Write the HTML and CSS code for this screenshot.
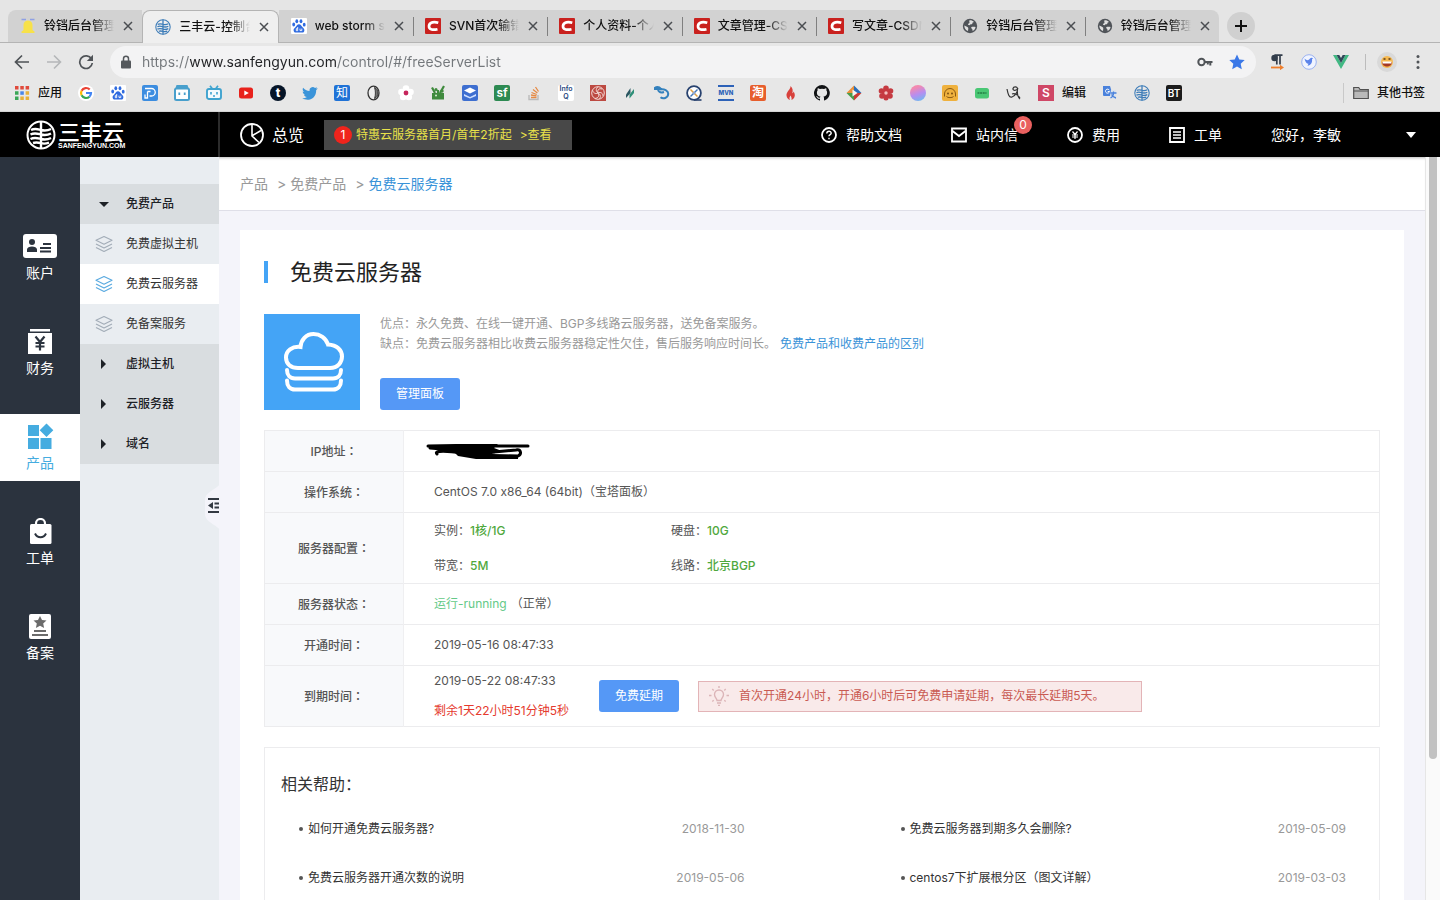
FILE: index.html
```html
<!DOCTYPE html>
<html lang="zh-CN">
<head>
<meta charset="utf-8">
<meta name="viewport" content="width=device-width, initial-scale=1">
<title>三丰云-控制台</title>
<link rel="stylesheet" href="styles.css">
</head>
<body>
<svg class="defs" aria-hidden="true">
  <symbol id="i-close" viewBox="0 0 12 12"><path d="M2 2l8 8M10 2l-8 8" stroke="#4a4d51" stroke-width="1.5" fill="none"/></symbol>
  <symbol id="i-csdn" viewBox="0 0 16 16"><rect width="16" height="16" rx="1" fill="#c9211e"/><path d="M13.300 4.800C9.500 3.700 4.400 3.800 4 8c-.3 4 4.500 4.200 8.500 3.200" stroke="#fff" stroke-width="2.700" fill="none"/></symbol>
  <symbol id="i-globe" viewBox="0 0 16 16"><circle cx="8" cy="8" r="7.200" fill="#505459"/><path d="M2.300 7.500l2.700 1.300c1.200.5 1.500 1.500 1.200 2.500l-.2 1.700C3.800 12.200 2.200 10 2.300 7.500zM7.500 2.300c1.500-.2 3.300.3 4.500 1.700-1 .2-1.600.6-1.600 1.300.2 1-1 1-1.800 1-.6.2-.4 1-1.200 1-.9 0-1.600-.4-1.400-1.200.2-.7 1.300-.4 1.500-1.300.1-.8-.6-1.300 0-2.500zM9.500 9c1.200-.6 2.700-.3 4.100-.1-.3 1.800-1.400 3.200-2.900 4.100-.3-.7 0-1.400-.6-1.900-.7-.6-1.300-1.500-.6-2.100z" fill="#e0e0e0"/></symbol>
  <symbol id="i-baidu" viewBox="0 0 16 16"><rect width="16" height="16" rx="1" fill="#fff"/><g fill="#2f6be0"><ellipse cx="5.800" cy="3.200" rx="1.400" ry="2"/><ellipse cx="10" cy="3.200" rx="1.400" ry="2"/><ellipse cx="2.700" cy="6.500" rx="1.400" ry="1.900"/><ellipse cx="13.200" cy="6.700" rx="1.400" ry="1.900"/><path d="M8 6.300c1.800 0 2.400 1.700 3.600 2.900 1.500 1.400 2.200 2.300 1.600 4-.7 2-3.300 1.300-5.200 1.300s-4.400.7-5.200-1.300c-.6-1.700.2-2.700 1.600-4C5.600 8 6.200 6.300 8 6.300z"/></g><path d="M6.700 9v3.700H5.300v-2h1.400M9 10.600v2h1.800v-2" stroke="#fff" stroke-width=".9" fill="none"/></symbol>
  <symbol id="i-sanfeng" viewBox="0 0 30 30"><circle cx="15" cy="15" r="13.500" fill="none" stroke="currentColor" stroke-width="2"/><path d="M15 1v28M5 10c4-2 6-1 10 0s6 1 10-1M4.500 14.500c4-2 6.500-1 10.500 0s6 1 10-1M4.500 19c4-2 6.500-1 10.500 0s6 1 10-1M7 23c3-1 5-.6 8 .2s5 .6 8-.6" fill="none" stroke="currentColor" stroke-width="2.400"/></symbol>
  <symbol id="i-layers" viewBox="0 0 18 18"><g fill="none" stroke="currentColor" stroke-width="1.200" stroke-linejoin="round"><path d="M9 1.500l8 3.800-8 3.900-8-3.900z"/><path d="M1 9l8 4 8-4M1 12.500l8 4 8-4"/></g></symbol>
</svg>

<div class="browser">
  <nav class="tabstrip" aria-label="标签页">
    <div class="tabs">
      <div class="tab first">
        <svg class="fav" viewBox="0 0 16 16"><path d="M1.500 1.500h4.500M10 1.500h4.500" stroke="#8ea0e4" stroke-width="1.500"/><path d="M3.500 12V7a4.500 4.500 0 019 0v5l2 1.500v1.500H1.500v-1.500z" fill="#f7e14a"/></svg>
        <span class="tab-title">铃铛后台管理系统</span><button class="x" aria-label="关闭"><svg><use href="#i-close"/></svg></button></div>
      <div class="tab active"><svg class="fav blue"><use href="#i-sanfeng"/></svg><span class="tab-title">三丰云-控制台首页</span><button class="x" aria-label="关闭"><svg><use href="#i-close"/></svg></button></div>
      <div class="tab"><svg class="fav"><use href="#i-baidu"/></svg><span class="tab-title">web storm svn</span><button class="x" aria-label="关闭"><svg><use href="#i-close"/></svg></button></div>
      <div class="tab sep"><svg class="fav"><use href="#i-csdn"/></svg><span class="tab-title">SVN首次输错密码</span><button class="x" aria-label="关闭"><svg><use href="#i-close"/></svg></button></div>
      <div class="tab sep"><svg class="fav"><use href="#i-csdn"/></svg><span class="tab-title">个人资料-个人中心</span><button class="x" aria-label="关闭"><svg><use href="#i-close"/></svg></button></div>
      <div class="tab sep"><svg class="fav"><use href="#i-csdn"/></svg><span class="tab-title">文章管理-CSDN</span><button class="x" aria-label="关闭"><svg><use href="#i-close"/></svg></button></div>
      <div class="tab sep"><svg class="fav"><use href="#i-csdn"/></svg><span class="tab-title">写文章-CSDN博客</span><button class="x" aria-label="关闭"><svg><use href="#i-close"/></svg></button></div>
      <div class="tab sep"><svg class="fav"><use href="#i-globe"/></svg><span class="tab-title">铃铛后台管理系统</span><button class="x" aria-label="关闭"><svg><use href="#i-close"/></svg></button></div>
      <div class="tab sep"><svg class="fav"><use href="#i-globe"/></svg><span class="tab-title">铃铛后台管理系统</span><button class="x" aria-label="关闭"><svg><use href="#i-close"/></svg></button></div>
    </div>
    <button class="newtab" aria-label="新标签页"><svg viewBox="0 0 14 14"><path d="M7 1v12M1 7h12" stroke="#111" stroke-width="2"/></svg></button>
  </nav>

  <div class="toolbar">
    <button class="tool" aria-label="后退"><svg viewBox="0 0 16 16"><path d="M15 8H2M8 1.500L1.500 8 8 14.500" fill="none" stroke="#4f5357" stroke-width="1.700"/></svg></button>
    <button class="tool" aria-label="前进"><svg viewBox="0 0 16 16"><path d="M1 8h13M8 1.500L14.500 8 8 14.500" fill="none" stroke="#b5b7b9" stroke-width="1.600"/></svg></button>
    <button class="tool" aria-label="刷新"><svg viewBox="0 0 16 16"><path d="M13.500 5A6.300 6.300 0 1014.300 9" fill="none" stroke="#4f5357" stroke-width="1.700"/><path d="M15 .8V7H8.800z" fill="#4f5357"/></svg></button>
    <div class="omnibox">
      <svg class="lock" viewBox="0 0 10 14"><path d="M2.500 6V3.800a2.500 2.500 0 015 0V6" fill="none" stroke="#54585c" stroke-width="1.500"/><rect y="5.500" width="10" height="8" rx="1" fill="#54585c"/></svg>
      <input class="url" type="text" aria-label="网址" value="https://www.sanfengyun.com/control/#/freeServerList">
      <svg class="ic16" viewBox="0 0 16 16"><circle cx="4.500" cy="8" r="3.200" fill="none" stroke="#505458" stroke-width="2"/><path d="M7.500 8h8M13.300 8v3.500M10.800 8v2.500" stroke="#505458" stroke-width="2"/></svg>
      <svg class="ic16" viewBox="0 0 16 16"><path d="M8 .5l2.300 5 5.400.6-4 3.700 1.100 5.400L8 12.500l-4.800 2.700 1.100-5.400-4-3.700 5.400-.6z" fill="#3b78e7"/></svg>
    </div>
    <div class="exts">
      <svg class="ic16" viewBox="0 0 16 16"><path d="M13.500 1.200H5.500M7.800 1v9.500M11 1v9.500" stroke="#333e4c" stroke-width="1.700" fill="none"/><circle cx="5.500" cy="4" r="3.200" fill="#333e4c"/><path d="M2 13.500h10" stroke="#ee7f2d" stroke-width="1.800"/><path d="M11 10.800l4 2.700-4 2.700z" fill="#ee7f2d"/></svg>
      <svg class="ic16" viewBox="0 0 16 16"><circle cx="8" cy="8" r="7.300" fill="#f0f4ff" stroke="#9bb2f1"/><path d="M3.500 4.500C6 7 7.500 6.500 9 4.500c1-1 2.500-.8 3-.2l-1 1c.5 3-1 6-4.500 6.500l1-2C5.500 9.800 4 7.500 3.500 4.500z" fill="#5b83ea"/></svg>
      <svg class="ic16" viewBox="0 0 16 16"><path d="M0 1h3.500L8 9l4.500-8H16L8 15z" fill="#41b883"/><path d="M3.500 1H6.300L8 4l1.700-3h2.800L8 9z" fill="#2f4858"/></svg>
      <i class="vline"></i>
      <svg class="avatar" viewBox="0 0 20 20"><circle cx="10" cy="10" r="10" fill="#d9d9d9"/><circle cx="10" cy="10" r="6" fill="#f6b950"/><path d="M5 10h10c0 6-10 6-10 0z" fill="#a53925"/><path d="M5.500 9.500h9v2h-9z" fill="#fff"/><path d="M6.500 7h2M11.500 7h2" stroke="#5b3a17" stroke-width="1.500"/></svg>
      <svg class="ic16" viewBox="0 0 16 16"><g fill="#505458"><circle cx="8" cy="2.500" r="1.500"/><circle cx="8" cy="8" r="1.500"/><circle cx="8" cy="13.500" r="1.500"/></g></svg>
    </div>
  </div>

  <nav class="bookmarks" aria-label="书签栏">
    <a class="bm" href="#"><svg viewBox="0 0 16 16"><path d="M1 1h3.500v3.500H1zM6.300 1h3.500v3.500H6.300zM11.600 1h3.500v3.500h-3.500z" fill="#e04a3c"/><path d="M1 6.300h3.500v3.500H1zM1 11.600h3.500v3.500H1z" fill="#3aa757"/><path d="M6.300 6.300h3.500v3.500H6.300z" fill="#4a86e8"/><path d="M11.600 6.300h3.500v3.500h-3.500zM6.300 11.600h3.500v3.500H6.300zM11.600 11.600h3.500v3.500h-3.500z" fill="#e8b13a"/></svg>应用</a>
    <a class="bm" href="#" aria-label="Google"><svg viewBox="0 0 16 16"><circle cx="8" cy="8" r="8" fill="#fff"/><g fill="none" stroke-width="2.200"><path d="M11.700 4.600A5 5 0 003.600 5.700" stroke="#ea4335"/><path d="M3.600 5.700a5 5 0 000 4.600" stroke="#fbbc05"/><path d="M3.600 10.300a5 5 0 007.800 1.400" stroke="#34a853"/><path d="M11.400 11.700A5 5 0 0013 8H8" stroke="#4285f4"/></g></svg></a>
    <a class="bm" href="#" aria-label="百度"><svg><use href="#i-baidu"/></svg></a>
    <a class="bm" href="#" aria-label="P"><svg viewBox="0 0 16 16"><rect width="16" height="16" rx="2" fill="#3c8de0"/><path d="M3 3.500h6.500a3.700 3.700 0 010 7.500H7.500M5.500 6.500V13H3V9.500M5.500 6.500h3" fill="none" stroke="#fff" stroke-width="1.300"/></svg></a>
    <a class="bm" href="#" aria-label="哔哩"><svg viewBox="0 0 16 16"><path d="M2.500 0h11l1 3h-13z" fill="#489fcc"/><rect x="1" y="3.500" width="14" height="11.500" rx="1.500" fill="#fff" stroke="#489fcc" stroke-width="2"/><path d="M5.300 7.500V10M10.700 7.500V10" stroke="#489fcc" stroke-width="1.800"/></svg></a>
    <a class="bm" href="#" aria-label="bilibili"><svg viewBox="0 0 16 16"><path d="M4 .8L6.500 4M12 .8L9.500 4" stroke="#3fa3cf" stroke-width="1.700"/><rect x="1" y="4" width="14" height="10" rx="2" fill="#f4fafd" stroke="#3fa3cf" stroke-width="1.900"/><path d="M5 7v2.500M11 7v2.500M7 11h2" stroke="#3fa3cf" stroke-width="1.600"/></svg></a>
    <a class="bm" href="#" aria-label="YouTube"><svg viewBox="0 0 16 16"><rect x="1" y="2.500" width="14" height="11" rx="2.500" fill="#e8221c"/><path d="M6.300 5.500v5L10.800 8z" fill="#fff"/></svg></a>
    <a class="bm" href="#"><span class="tile round navy">t</span></a>
    <a class="bm" href="#" aria-label="Twitter"><svg viewBox="0 0 16 16"><path d="M15.800 3.300l-1.700.5.9-1.600-2 .8a3.200 3.200 0 00-5.400 3C4.800 6 2.600 4.600 1.100 2.700c-.8 1.400-.4 3.200 1 4.200l-1.400-.3c0 1.500 1 2.800 2.600 3.200H1.900c.4 1.200 1.500 2.200 3 2.200-1.300 1-2.900 1.400-4.600 1.300 5.800 3.500 14 .6 13.900-8.300.6-.4 1.200-1 1.600-1.700z" fill="#3b94d9"/></svg></a>
    <a class="bm" href="#"><span class="tile zhi">知</span></a>
    <a class="bm" href="#" aria-label="月"><svg viewBox="0 0 16 16"><ellipse cx="7.500" cy="8" rx="5.500" ry="6.800" fill="#eee" stroke="#333" stroke-width="1.300"/><path d="M8.500 2.500c4.500 1.500 4.500 9.500 0 11 1.200-3.500 1.200-7.500 0-11z" fill="#777" stroke="#222" stroke-width=".8"/></svg></a>
    <a class="bm" href="#" aria-label="花"><svg viewBox="0 0 16 16"><g fill="#fff"><circle cx="8" cy="3.500" r="3.300"/><circle cx="12.500" cy="7" r="3.300"/><circle cx="10.800" cy="12" r="3.300"/><circle cx="5.200" cy="12" r="3.300"/><circle cx="3.500" cy="7" r="3.300"/></g><circle cx="8" cy="8" r="2.400" fill="#c6265c"/></svg></a>
    <a class="bm" href="#" aria-label="草"><svg viewBox="0 0 16 16"><path d="M2 8h12v6.500H2z" fill="#3f8a3d"/><path d="M5 8L2 2.500M10 8l4-7M8 8V5" stroke="#3f8a3d" stroke-width="2.200"/><circle cx="6" cy="4.500" r="1.500" fill="#3f8a3d"/><circle cx="12" cy="6" r="1.700" fill="#3f8a3d"/><circle cx="6" cy="10.500" r="1" fill="#d9edd3"/></svg></a>
    <a class="bm" href="#" aria-label="文档"><svg viewBox="0 0 16 16"><rect width="16" height="16" rx="2" fill="#3e6fd0"/><path d="M8 2.500l6 3-6 3-6-3z" fill="#fff"/><path d="M2 9l6 3 6-3v2l-6 2.500L2 11z" fill="#cfe0ff"/></svg></a>
    <a class="bm" href="#"><span class="tile green">sf</span></a>
    <a class="bm" href="#" aria-label="Stack Overflow"><svg viewBox="0 0 16 16"><path d="M3 10v4.500h9V10" fill="none" stroke="#bbb" stroke-width="1.400"/><path d="M5 12.500h5.500M5 10l5.500.8M5.500 7.500l5.200 2M7 4.500l4.400 3.400M9.500 2l3 4.500" stroke="#e58a45" stroke-width="1.300"/></svg></a>
    <a class="bm" href="#"><span class="tile info">Info<br>Q</span></a>
    <a class="bm" href="#" aria-label="螺旋"><svg viewBox="0 0 16 16"><rect width="16" height="16" fill="#bd4a42"/><circle cx="8" cy="8" r="6.300" fill="none" stroke="#f4dad6"/><path d="M8 8c-1-3 1-5 4-4M8 8c3-1.500 5 .5 5 3M8 8c2 3 0 5-3 5.500M8 8c-3 1.500-5-.5-5.500-3M8 8C5 5.500 6.500 3 8 2M8 8c2.500 1 3 4 1.500 6" fill="none" stroke="#f4dad6"/></svg></a>
    <a class="bm" href="#" aria-label="叶"><svg viewBox="0 0 16 16"><path d="M4 9.500L8.500 3v5L4 13z" fill="#2b5661"/><path d="M7.500 9.500L12 4v4l-4.500 5.500z" fill="#2f8f78"/></svg></a>
    <a class="bm" href="#" aria-label="龙"><svg viewBox="0 0 16 16"><path d="M.5 3.200c2.500-1.800 5-1 6.500.8H.5zM6 4.500c4-1 8.500 1 8.200 4.500-.3 4-5 5.500-7.700 3.300M4 5c1 2.500 3.500 2.800 6 2" fill="none" stroke="#3481bd" stroke-width="2"/></svg></a>
    <a class="bm" href="#" aria-label="查询"><svg viewBox="0 0 16 16"><circle cx="8" cy="8" r="6.900" fill="#fff" stroke="#28426f" stroke-width="1.800"/><path d="M8 15h7.500" stroke="#28426f" stroke-width="1.600"/><path d="M4.500 4.500l7 7" stroke="#e1a043" stroke-width="1.500"/><path d="M11.500 4.500l-7 7" stroke="#4479bd" stroke-width="1.500"/><circle cx="8" cy="8" r="1.500" fill="#8fa6c9"/></svg></a>
    <a class="bm" href="#"><span class="tile mvn">MVN</span></a>
    <a class="bm" href="#"><span class="tile tao">淘</span></a>
    <a class="bm" href="#" aria-label="火"><svg viewBox="0 0 16 16"><path d="M8.500 1c.5 3-4.500 6-4 9.500.2 2.500 2 4 3.500 4.500-1-2-.5-3 .8-4.500.2 1.500 1.200 2 .7 4.500 2.500-1 3.800-3.500 3.200-6-.3-1.200-.8-1.800-1-2.500-.5 1-.7 1.500-1.400 1.800C11 6 11 3 8.500 1z" fill="#d8413c"/></svg></a>
    <a class="bm" href="#" aria-label="GitHub"><svg viewBox="0 0 16 16"><path d="M8 0a8 8 0 00-2.500 15.600c.4 0 .5-.2.500-.4v-1.500c-2.200.5-2.700-1-2.700-1-.4-.9-.9-1.200-.9-1.200-.7-.5.100-.5.100-.5.800.1 1.200.8 1.200.8.700 1.300 1.900.9 2.300.7.100-.5.300-.9.500-1.100-1.800-.2-3.600-.9-3.600-4 0-.9.300-1.600.8-2.100-.1-.2-.4-1 .1-2.100 0 0 .7-.2 2.200.8a7.500 7.500 0 014 0c1.500-1 2.200-.8 2.200-.8.4 1.100.2 1.900.1 2.100.5.600.8 1.300.8 2.100 0 3.100-1.900 3.800-3.700 4 .3.300.6.800.6 1.500v2.200c0 .2.100.5.600.4A8 8 0 008 0z" fill="#101214"/></svg></a>
    <a class="bm" href="#" aria-label="菱形"><svg viewBox="0 0 16 16"><path d="M8 .5V8H.5z" fill="#e9903a"/><path d="M8 .5V8h7.500z" fill="#2b6fb8"/><path d="M.5 8H8v7.500z" fill="#4a9c4b"/><path d="M15.500 8H8v7.500z" fill="#c93b35"/><path d="M6.500 4.500L11.500 8l-5 3.500z" fill="#f5f5f5"/></svg></a>
    <a class="bm" href="#" aria-label="红花"><svg viewBox="0 0 16 16"><g fill="#c53a41"><circle cx="8" cy="3.300" r="2.800"/><circle cx="12.500" cy="6" r="2.800"/><circle cx="12" cy="11" r="2.800"/><circle cx="8" cy="13" r="2.500"/><circle cx="4" cy="11" r="2.800"/><circle cx="3.500" cy="6" r="2.800"/><circle cx="8" cy="8" r="4"/></g><circle cx="8" cy="8" r="1.700" fill="#f4c0c0"/></svg></a>
    <a class="bm" href="#" aria-label="渐变"><span class="orb"></span></a>
    <a class="bm" href="#" aria-label="小熊"><svg viewBox="0 0 16 16"><rect width="16" height="16" rx="2" fill="#efb13e"/><path d="M2.500 11.500V9a5.500 5.500 0 0111 0v2.500M4.500 11.500c1 1.500 6 1.500 7 0" fill="none" stroke="#8a5a13"/><circle cx="6" cy="8.500" r=".9" fill="#714812"/><circle cx="10" cy="8.500" r=".9" fill="#714812"/></svg></a>
    <a class="bm" href="#" aria-label="绿卡"><svg viewBox="0 0 16 16"><rect x="1" y="3" width="14" height="10.500" rx="2.500" fill="#49c774"/><path d="M3.500 8h9" stroke="#2c8f50" stroke-width="2" stroke-dasharray="2 .6"/></svg></a>
    <a class="bm" href="#" aria-label="签名"><svg viewBox="0 0 16 16"><path d="M1 4c1 5 2 9 5 8s6-5 5.500-8.500C11 1 7.500 1.500 7 3.500 6.500 6 11 6 12 3M11.500 3c-.5 5 0 9 2.500 11M6 9c3-1 6 1 8 4" fill="none" stroke="#333" stroke-width="1.200"/></svg></a>
    <a class="bm" href="#"><span class="tile rose">S</span>编辑</a>
    <a class="bm" href="#" aria-label="翻译"><svg viewBox="0 0 16 16"><path d="M1 1h7l3 10H2a1 1 0 01-1-1z" fill="#4a82dc"/><path d="M7.300 5.200a2 2 0 10.200 1.300H5.700" fill="none" stroke="#fff"/><path d="M9 5h5v9H9l-1-3" fill="#dce3ec"/><path d="M8.500 8h6M11.500 6.500V8c0 2-1 4-3 5M9.500 9.500c1 2 2.500 3 4.500 3.500" stroke="#4a82dc" stroke-width="1.300" fill="none"/></svg></a>
    <a class="bm" href="#" aria-label="三丰云"><svg class="blue"><use href="#i-sanfeng"/></svg></a>
    <a class="bm" href="#"><span class="tile black">BT</span></a>
    <a class="bm other" href="#"><svg viewBox="0 0 16 16"><path d="M.7 13.500v-11h5l1.300 2h8.300v9z" fill="#b9b9b9" stroke="#515151" stroke-width="1.200"/><path d="M1 6h14" stroke="#515151"/></svg>其他书签</a>
  </nav>
</div>

<header class="topbar">
  <a class="logo" href="#"><svg><use href="#i-sanfeng"/></svg><span class="logo-words"><b>三丰云</b><small>SANFENGYUN.COM</small></span></a>
  <a class="overview" href="#"><svg viewBox="0 0 24 24"><circle cx="12" cy="12" r="11" fill="none" stroke="#fff" stroke-width="1.800"/><path d="M12 1v12l7 6.500M12.500 12.500l8.500-5" fill="none" stroke="#fff" stroke-width="1.600"/></svg>总览</a>
  <a class="promo" href="#"><span class="dot">1</span><span>特惠云服务器首月/首年2折起</span><span class="look">&gt;查看</span></a>
  <nav class="topnav">
    <a href="#"><svg viewBox="0 0 16 16"><circle cx="8" cy="8" r="7" fill="none" stroke="#fff" stroke-width="1.800"/><path d="M5.800 6.500c0-3 4.500-2.800 4.400-.2 0 1.400-2.200 1.400-2.200 3M8 10.800v1.500" fill="none" stroke="#fff" stroke-width="1.400"/></svg>帮助文档</a>
    <a href="#"><svg viewBox="0 0 16 16"><path d="M1 1.500h14v13H1z" fill="none" stroke="#fff" stroke-width="1.800"/><path d="M1.500 4L8 9l6.500-5" fill="none" stroke="#fff" stroke-width="1.800"/></svg>站内信<span class="count">0</span></a>
    <a href="#"><svg viewBox="0 0 16 16"><circle cx="8" cy="8" r="7" fill="none" stroke="#fff" stroke-width="1.800"/><path d="M5.500 4.500L8 7.500l2.500-3M8 7.500V12M5 8h6M5 10h6" fill="none" stroke="#fff" stroke-width="1.200"/></svg>费用</a>
    <a href="#"><svg viewBox="0 0 16 16"><path d="M1 1h14v14H1z" fill="none" stroke="#fff" stroke-width="1.800"/><path d="M4 5h8M4 8h8M4 11h8" stroke="#fff" stroke-width="1.300"/></svg>工单</a>
    <button class="user">您好，李敏<svg viewBox="0 0 10 6"><path d="M0 0h10L5 6z" fill="#fff"/></svg></button>
  </nav>
</header>

<div class="app">
  <nav class="rail">
    <a href="#"><svg viewBox="0 0 36 26"><rect x="1" y="1" width="34" height="24" rx="3" fill="#fff"/><g fill="#2b333e"><circle cx="10" cy="9" r="3"/><path d="M5 19v-2.500c0-4 10-4 10 0V19zM21 10h8v2h-8zM18 14h11v2H18zM18 17.500h11v2H18z"/></g></svg>账户</a>
    <a href="#"><svg viewBox="0 0 36 26"><path d="M8 1h20v2.500H8zM6 5h24v21H6z" fill="#fff"/><path d="M13.500 8.500L18 14l4.500-5.500M18 14v8.500M13.500 15h9M13.500 18.500h9" fill="none" stroke="#2b333e" stroke-width="2.200"/></svg>财务</a>
    <a href="#" class="on"><svg viewBox="0 0 36 26"><path d="M6 2h11v11H6zM6 15h11v11H6zM18.500 15h11v11h-11zM24.500 .5l6.800 6.800-6.800 6.800-6.800-6.800z" fill="#45ace0"/></svg>产品</a>
    <a href="#"><svg viewBox="0 0 36 26"><path d="M14 7V5.500a4.500 4.500 0 019 0V7" fill="none" stroke="#fff" stroke-width="2.200"/><rect x="8" y="6" width="21.500" height="20" rx="1.500" fill="#fff"/><path d="M13 15.500c2.500 5 8.500 5 11 0" fill="none" stroke="#2b333e" stroke-width="2"/></svg>工单</a>
    <a href="#"><svg viewBox="0 0 36 26"><rect x="7" y="1" width="22" height="25" rx="2" fill="#fff"/><path d="M18 3l2 4 4.500.5-3.300 3 .9 4.500-4.100-2.200-4.100 2.200.9-4.500-3.300-3L16 7z" fill="#6b6b6b"/><path d="M12 18h12M10 22h16" stroke="#6b6b6b" stroke-width="2"/></svg>备案</a>
  </nav>

  <nav class="menu">
    <a href="#" class="group"><svg class="tri" viewBox="0 0 18 18"><path d="M4 7h10l-5 5z"/></svg>免费产品</a>
    <a href="#"><svg><use href="#i-layers"/></svg>免费虚拟主机</a>
    <a href="#" class="current"><svg><use href="#i-layers"/></svg>免费云服务器</a>
    <a href="#"><svg><use href="#i-layers"/></svg>免备案服务</a>
    <a href="#" class="group"><svg class="tri" viewBox="0 0 18 18"><path d="M6 4v10l5-5z"/></svg>虚拟主机</a>
    <a href="#" class="group"><svg class="tri" viewBox="0 0 18 18"><path d="M6 4v10l5-5z"/></svg>云服务器</a>
    <a href="#" class="group"><svg class="tri" viewBox="0 0 18 18"><path d="M6 4v10l5-5z"/></svg>域名</a>
    <button class="fold" aria-label="收起菜单"><svg viewBox="0 0 17 50"><path d="M17 0v50C15 43 1 41 1 32V18C1 9 15 7 17 0z" fill="#f4f4fa"/><path d="M4 17h11M4 30h11M10.500 21.500H15M10.500 25.500H15" stroke="#333942" stroke-width="1.800"/><path d="M9 20v7l-5-3.500z" fill="#333942"/></svg></button>
  </nav>

  <main class="content">
    <div class="crumbs"><a href="#">产品</a><span class="gt">&gt;</span><a href="#">免费产品</a><span class="gt">&gt;</span><a href="#" class="here">免费云服务器</a></div>
    <section class="card">
      <h1>免费云服务器</h1>
      <div class="intro">
        <svg class="cloud" viewBox="0 0 96 96"><rect width="96" height="96" fill="#44a4f6"/><g fill="none" stroke="#fff" stroke-width="4" stroke-linecap="round"><path d="M34 54h32c8 0 12-6 12-11.500C78 36 73 31 64 30.500 62 24 56 20 49.500 20 42 20 37 26 36.500 33 28 32 22 37 22 43.500 22 50 27 54 34 54z"/><path d="M23 56c0 5 3 8.500 8 8.500h38c5 0 8-3.500 8-8.500M23 66.500c0 5.500 3 9 8 9h38c5 0 8-3.500 8-9"/></g></svg>
        <div class="pros">
          <p>优点：永久免费、在线一键开通、BGP多线路云服务器，送免备案服务。</p>
          <p>缺点：免费云服务器相比收费云服务器稳定性欠佳，售后服务响应时间长。<a href="#">免费产品和收费产品的区别</a></p>
          <button class="btn">管理面板</button>
        </div>
      </div>
      <table class="info-table">
        <tr><th scope="row">IP地址<i lang="zh-TW">：</i></th><td><svg class="scribble" viewBox="0 0 104 20" role="img" aria-label="已涂抹"><path d="M2 5h100M4 7l35 3M11 13c-4-4 12-3 25-1l30 3h26c4-2 3-7-2-6l-22 2" fill="none" stroke="#000" stroke-width="3" stroke-linecap="round"/><path d="M2 4l28-1h42l-4 4 8 3-10 3 26 1v4H50l-18-3-4-4-18-4z" fill="#000"/></svg></td></tr>
        <tr><th scope="row">操作系统<i lang="zh-TW">：</i></th><td>CentOS 7.0 x86_64 (64bit)（宝塔面板）</td></tr>
        <tr><th scope="row">服务器配置<i lang="zh-TW">：</i></th><td><div class="specs"><span>实例：<b>1核/1G</b></span><span>硬盘：<b>10G</b></span><span>带宽：<b>5M</b></span><span>线路：<b>北京BGP</b></span></div></td></tr>
        <tr><th scope="row">服务器状态<i lang="zh-TW">：</i></th><td><span class="running">运行-running</span>（正常）</td></tr>
        <tr><th scope="row">开通时间<i lang="zh-TW">：</i></th><td>2019-05-16 08:47:33</td></tr>
        <tr><th scope="row">到期时间<i lang="zh-TW">：</i></th><td><div class="expire"><div class="times"><p>2019-05-22 08:47:33</p><p class="left">剩余1天22小时51分钟5秒</p></div><button class="btn">免费延期</button><p class="notice"><svg viewBox="0 0 20 20"><g fill="none" stroke="#dcb5b8" stroke-width="1.400"><path d="M8 14.500c0-2-2.500-3-2.500-6a4.500 4.500 0 019 0c0 3-2.500 4-2.500 6zM8 17h4M9 19.500h2M10 0v2M3.300 3l1.400 1.400M16.700 3l-1.400 1.400M0 9.500h2.500M17.500 9.500H20M3.300 15.500l1.400-1.200M16.700 15.500l-1.400-1.200"/></g></svg>首次开通24小时，开通6小时后可免费申请延期，每次最长延期5天。</p></div></td></tr>
      </table>
      <section class="help">
        <h2>相关帮助：</h2>
        <ul>
          <li><a href="#">如何开通免费云服务器?</a><time>2018-11-30</time></li>
          <li><a href="#">免费云服务器到期多久会删除?</a><time>2019-05-09</time></li>
          <li><a href="#">免费云服务器开通次数的说明</a><time>2019-05-06</time></li>
          <li><a href="#">centos7下扩展根分区（图文详解）</a><time>2019-03-03</time></li>
        </ul>
      </section>
    </section>
  </main>
  <div class="scroll"><i></i></div>
</div>
</body>
</html>
```
FILE: styles.css
```css
* { box-sizing: border-box; }
body {
  margin: 0;
  height: 100vh;
  display: flex;
  flex-direction: column;
  overflow: hidden;
  font: 12px/20px Inter, "Noto Sans CJK SC", sans-serif;
  color: #555;
}
a { color: inherit; text-decoration: none; }
p, h1, h2, ul { margin: 0; padding: 0; }
button { border: 0; padding: 0; background: none; font: inherit; color: inherit; }
svg { display: block; flex: none; }
i { font-style: normal; }
.defs { position: absolute; width: 0; height: 0; }
.blue { color: #3d7cb8; }
.ic16 { width: 16px; height: 16px; }

/* browser frame */
.browser { flex: none; background: #e7e7e7; color: #111; }
.tabstrip {
  display: flex;
  align-items: center;
  gap: 8px;
  height: 43px;
  padding: 10px 8px 0;
  border-bottom: 1px solid #b4b4b4;
  background: #e5e5e5;
}
.tabs { display: flex; flex: 0 1 1211px; align-self: stretch; min-width: 0; }
.tab {
  flex: 1 1 0;
  min-width: 0;
  display: flex;
  align-items: center;
  gap: 8px;
  padding: 0 8px 0 12px;
  background: #d2d2d2;
  position: relative;
}
.tab.first { border-radius: 8px 0 0 0; }
.tab:last-child { border-radius: 0 8px 0 0; }
.tab.active {
  background: #efefef;
  border: 1px solid #b4b4b4;
  border-bottom: 0;
  border-radius: 8px 8px 0 0;
  margin-bottom: -1px;
}
.tab.sep::before {
  content: "";
  position: absolute;
  left: 0;
  top: 7px;
  width: 1px;
  height: 19px;
  background: #808080;
}
.fav { width: 16px; height: 16px; }
.tab-title {
  flex: 1;
  min-width: 0;
  overflow: hidden;
  white-space: nowrap;
  font-weight: 500;
  -webkit-mask-image: linear-gradient(90deg, #000 70%, transparent);
  mask-image: linear-gradient(90deg, #000 70%, transparent);
}
.x svg { width: 12px; height: 12px; }
.newtab {
  display: grid;
  place-items: center;
  width: 28px;
  height: 28px;
  border-radius: 50%;
  background: #d0d0d0;
}
.newtab svg { width: 14px; height: 14px; }
.toolbar { display: flex; align-items: center; height: 37px; padding: 0 14px; gap: 16px; }
.tool svg { width: 16px; height: 16px; }
.omnibox {
  flex: 1;
  display: flex;
  align-items: center;
  gap: 16px;
  height: 32px;
  padding: 0 11px;
  border-radius: 16px;
  background: #f3f3f4;
}
.lock { width: 10px; height: 14px; }
.url {
  flex: 1;
  min-width: 0;
  height: 24px;
  padding: 0;
  margin-left: -5px;
  border: 0;
  outline: 0;
  font: 14px/24px Inter, sans-serif;
  color: #5f6368;
  background: linear-gradient(90deg, #73777b 48px, #202124 48px, #202124 195px, #73777b 195px);
  -webkit-background-clip: text;
  background-clip: text;
  -webkit-text-fill-color: transparent;
}
.exts { display: flex; align-items: center; gap: 16px; margin-left: -3px; }
.vline { width: 1px; height: 16px; background: #bcbcbc; margin-right: -5px; }
.avatar { width: 20px; height: 20px; }
.exts .ic16:last-child { margin-left: -3px; }
.bookmarks {
  display: flex;
  align-items: center;
  gap: 16px;
  height: 32px;
  padding: 0 15px 6px 14px;
  border-bottom: 1px solid #d4d4d4;
  font-weight: 500;
  white-space: nowrap;
}
.bm { display: flex; align-items: center; gap: 8px; }
.bm svg { width: 16px; height: 16px; }
.bm.other { margin-left: auto; padding-left: 9px; border-left: 1px solid #c9c9c9; }
.tile {
  width: 16px;
  height: 16px;
  border-radius: 2px;
  display: block;
  text-align: center;
  font-size: 12px;
  line-height: 16px;
  font-weight: 600;
  color: #fff;
}
.round { border-radius: 50%; }
.navy { background: #051427; font-weight: 800; }
.zhi { background: #1f72d6; font-weight: 400; }
.green { background: #2d8a52; }
.info { background: #fff; color: #24457c; font-size: 7px; line-height: 8px; }
.mvn { border: solid #2d62b8; border-width: 2px 0; border-radius: 0; color: #2d62b8; font-size: 6px; line-height: 12px; font-weight: 800; }
.tao { background: #e75e2c; }
.orb { width: 16px; height: 16px; border-radius: 50%; background: linear-gradient(160deg, #f38ab0 20%, #b78df0 55%, #62c1ef); }
.rose { background: #cf4766; border-radius: 0; }
.black { background: #1c1c1c; font-size: 10px; }

/* console header */
.topbar {
  flex: none;
  display: flex;
  align-items: center;
  height: 45px;
  background: #000;
  color: #fff;
  white-space: nowrap;
}
.logo {
  width: 220px;
  align-self: stretch;
  display: flex;
  align-items: center;
  gap: 2px;
  padding-left: 26px;
  border-right: 2px solid #2c2c2c;
}
.logo > svg { width: 30px; height: 30px; }
.logo-words { display: flex; flex-direction: column; }
.logo-words b { font: 500 22px/22px "Noto Sans CJK SC", sans-serif; }
.logo-words small { font: 700 7px/10px "Liberation Sans", sans-serif; }
.overview { display: flex; align-items: center; gap: 8px; padding-left: 20px; font-size: 16px; }
.overview svg { width: 24px; height: 24px; }
.promo {
  display: flex;
  align-items: center;
  height: 30px;
  gap: 4px;
  margin-left: 20px;
  padding: 0 20px 0 10px;
  background: #484848;
  color: #e9e24a;
}
.dot { width: 18px; height: 18px; border-radius: 50%; background: #f0241c; color: #fff; text-align: center; line-height: 18px; }
.look { margin-left: 4px; }
.topnav { display: flex; align-items: center; gap: 49px; margin-left: auto; padding-right: 24px; font-size: 14px; }
.topnav a { display: flex; align-items: center; gap: 9px; position: relative; }
.topnav a svg { width: 16px; height: 16px; }
.count {
  position: absolute;
  top: -9px;
  right: -14px;
  width: 18px;
  height: 18px;
  border-radius: 50%;
  background: #e9605f;
  text-align: center;
  font-size: 12px;
  line-height: 18px;
}
.user { display: flex; align-items: center; gap: 65px; }
.user svg { width: 10px; height: 6px; }

/* layout */
.app { flex: 1; min-height: 0; display: flex; }
.rail {
  flex: none;
  width: 80px;
  display: flex;
  flex-direction: column;
  gap: 28px;
  padding-top: 67px;
  background: #2b333e;
  color: #fff;
  font-size: 14px;
}
.rail a { display: flex; flex-direction: column; align-items: center; gap: 4px; height: 67px; padding-top: 9px; }
.rail svg { width: 36px; height: 26px; }
.rail .on { background: #fff; color: #45ace0; }
.menu {
  flex: none;
  width: 139px;
  padding-top: 27px;
  background: #e9edf1;
  position: relative;
  color: #333;
}
.menu a { display: flex; align-items: center; height: 40px; padding-left: 15px; gap: 13px; }
.menu svg { width: 18px; height: 18px; color: #a3adb8; }
.menu .group { background: #d9dde0; font-weight: 500; color: #1d2126; }
.menu .current { background: #fff; }
.menu .current svg { color: #5aaae0; }
.tri { fill: #1d2126; }
.fold { position: absolute; right: -2px; top: 325px; }
.menu .fold svg { width: 17px; height: 50px; }

.content { flex: 1; min-width: 0; overflow: hidden; background: #f4f4fa; }
.crumbs {
  display: flex;
  height: 54px;
  align-items: center;
  padding-left: 21px;
  background: #fff;
  border-bottom: 1px solid #dfdfe8;
  box-shadow: inset 0 3px 3px -2px #bbb;
  font-size: 14px;
  color: #999;
}
.gt { margin: 0 4px 0 9px; }
.here { color: #3a93d8; }
.card { margin: 19px 21px 0; padding: 24px; background: #fff; min-height: 700px; }
h1 {
  display: flex;
  align-items: center;
  gap: 22px;
  height: 36px;
  font-size: 22px;
  font-weight: 400;
  color: #222;
}
h1::before { content: ""; width: 4px; height: 22px; background: #44a4f6; }
.intro { display: flex; gap: 20px; margin: 24px 0 20px; color: #999; }
.cloud { width: 96px; height: 96px; }
.pros a { color: #3a93d8; margin-left: 4px; }
.btn { width: 80px; height: 32px; border-radius: 3px; background: #5598f6; color: #fff; }
.pros .btn { margin-top: 24px; }
.info-table { width: 100%; border-collapse: collapse; table-layout: fixed; border: 1px solid #ececee; }
.info-table tr { border-bottom: 1px solid #ececee; }
th { width: 139px; height: 41px; padding: 0; background: #f8f9fb; border-right: 1px solid #efeff1; font-weight: 500; }
th i { font-family: "Noto Sans CJK TC", sans-serif; }
td { padding: 0 0 0 30px; }
.scribble { width: 104px; height: 20px; margin-left: -8px; }
.specs { display: grid; grid-template-columns: 237px 1fr; line-height: 35px; }
.specs b { color: #4fa83d; font-weight: 500; }
.running { color: #63c987; margin-right: 4px; }
.expire { display: flex; align-items: center; height: 60px; }
.times { width: 165px; line-height: 30px; }
.left { color: #e53a2e; }
.notice {
  display: flex;
  align-items: center;
  gap: 10px;
  width: 444px;
  height: 31px;
  margin-left: 19px;
  padding-left: 10px;
  border: 1px solid #e3b4b7;
  background: #f9eaea;
  color: #c95a52;
}
.notice svg { width: 20px; height: 20px; }
.help { margin-top: 20px; padding: 24px 33px 24px 16px; border: 1px solid #ececee; }
h2 { font-size: 16px; line-height: 24px; font-weight: 400; color: #333; }
.help ul {
  display: grid;
  grid-template-columns: 1fr 1fr;
  column-gap: 156px;
  padding: 8px 0 0 18px;
  list-style: none;
}
.help li { display: flex; align-items: center; height: 49px; color: #333; }
.help li::before { content: ""; width: 4px; height: 4px; margin-right: 5px; border-radius: 50%; background: #555; }
.help time { margin-left: auto; color: #999; }
.scroll { flex: none; width: 15px; padding: 0 3px; border-left: 1px solid #e6e6e6; background: #fafafa; }
.scroll i { display: block; width: 8px; height: 81%; border-radius: 0 0 4px 4px; background: #c1c1c1; }
```
